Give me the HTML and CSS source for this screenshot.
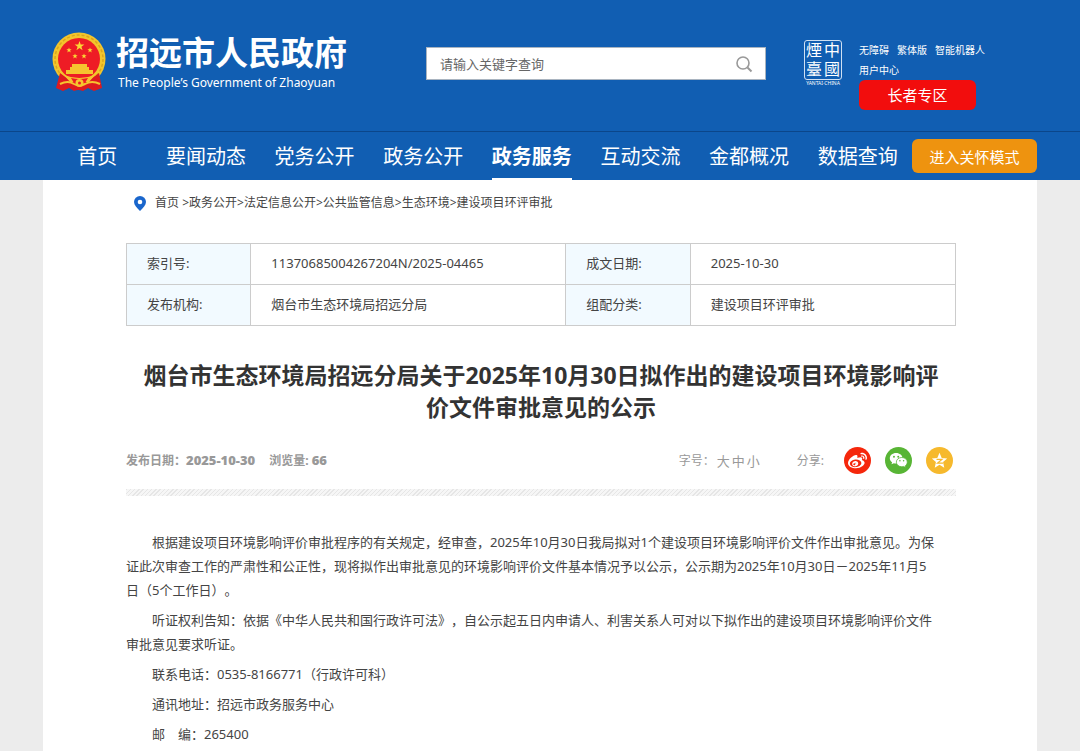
FILE: index.html
```html
<!DOCTYPE html>
<html lang="zh-CN">
<head>
  <meta charset="UTF-8" />
  <meta name="viewport" content="width=device-width, initial-scale=1.0" />
  <title>招远市人民政府</title>
  <link rel="stylesheet" href="styles.css">
</head>
<body>
  <header class="header">
    <div class="container top">
      <a class="logo" href="#">
        <svg class="emblem" viewBox="0 0 55 61" aria-hidden="true">
          <circle cx="27" cy="27" r="26.500" fill="#f3c52c"/>
          <circle cx="27" cy="27" r="24" fill="none" stroke="#dca51c" stroke-width="1.500" stroke-dasharray="3 2"/>
          <circle cx="27" cy="27" r="21" fill="#ee1c25"/>
          <path d="M27.500 9l1.200 3.500h3.700l-3 2.200 1.200 3.500-3.100-2.200-3.100 2.200 1.200-3.500-3-2.200h3.700z" fill="#fbd935"/>
          <g fill="#fbd935">
            <path id="star" d="M17 15.500l.7 1.800h1.900l-1.500 1.200.6 1.900-1.700-1.200-1.700 1.200.6-1.900-1.500-1.200h1.900z"/>
            <use href="#star" x="6" y="6"/>
            <use href="#star" x="15" y="6"/>
            <use href="#star" x="21"/>
          </g>
          <path d="M20 32h15v3h2v3h4v4H14v-4h4v-3h2z" fill="#f6c42f"/>
          <path d="M8 41l8 6q11 4 23 0l8-6 3 15-8 3-6-3-5 3q-5-2-9 0l-5-3-6 3-7-3z" fill="#dd1a1f"/>
          <path d="M12 43q15 6 31 0l-6 7H18z" fill="#f6c42f"/>
          <path d="M19 46q8 2 17 0l-3 5H22z" fill="#ee1c25"/>
          <path d="M8 52q8-4 14 0 5 3 11 0 7-4 15 0" fill="none" stroke="#f6c42f" stroke-width="2"/>
          <circle cx="27.500" cy="51" r="4" fill="#f6c42f"/>
          <circle cx="27.500" cy="51" r="1.500" fill="#ee1c25"/>
        </svg>
        <span class="logo-text">
          <strong>招远市人民政府</strong>
          <small>The People’s Government of Zhaoyuan</small>
        </span>
      </a>

      <form class="search">
        <input type="text" placeholder="请输入关键字查询" aria-label="请输入关键字查询">
        <button type="button" aria-label="搜索">
          <svg viewBox="0 0 18 18" width="18" height="18">
            <circle cx="8" cy="8" r="6" fill="none" stroke="#999" stroke-width="1.600"/>
            <path d="M12.500 12.500l4 4" stroke="#999" stroke-width="2"/>
          </svg>
        </button>
      </form>

      <div class="tools">
        <a class="seal" href="#">
          <span class="seal-box"><i>煙</i><i>中</i><i>臺</i><i>國</i></span>
          <span class="seal-name">YANTAI·CHINA</span>
        </a>
        <div class="links">
          <div class="links-row">
            <a href="#">无障碍</a>
            <a href="#">繁体版</a>
            <a href="#">智能机器人</a>
          </div>
          <div class="links-row">
            <a href="#">用户中心</a>
          </div>
          <button class="elder" type="button">长者专区</button>
        </div>
      </div>
    </div>

    <div class="nav-bar">
      <nav class="container nav">
        <ul>
          <li><a href="#">首页</a></li>
          <li><a href="#">要闻动态</a></li>
          <li><a href="#">党务公开</a></li>
          <li><a href="#">政务公开</a></li>
          <li><a class="active" href="#">政务服务</a></li>
          <li><a href="#">互动交流</a></li>
          <li><a href="#">金都概况</a></li>
          <li><a href="#">数据查询</a></li>
        </ul>
        <button class="care" type="button">进入关怀模式</button>
      </nav>
    </div>
  </header>

  <main class="container main">
    <div class="crumbs">
      <svg viewBox="0 0 12 15" width="12" height="15" aria-hidden="true">
        <path d="M6 0a6 6 0 0 1 6 6c0 3-3 6-6 9C3 12 0 9 0 6a6 6 0 0 1 6-6z" fill="#1a66cc"/>
        <circle cx="6" cy="6" r="2.300" fill="#fff"/>
      </svg>
      <div><a href="#">首页</a> &gt;<a href="#">政务公开</a>&gt;<a href="#">法定信息公开</a>&gt;<a href="#">公共监管信息</a>&gt;<a href="#">生态环境</a>&gt;<a href="#">建设项目环评审批</a></div>
    </div>

    <table class="info">
      <tr>
        <th scope="row">索引号:</th>
        <td>11370685004267204N/2025-04465</td>
        <th scope="row">成文日期:</th>
        <td>2025-10-30</td>
      </tr>
      <tr>
        <th scope="row">发布机构:</th>
        <td>烟台市生态环境局招远分局</td>
        <th scope="row">组配分类:</th>
        <td>建设项目环评审批</td>
      </tr>
    </table>

    <h1>烟台市生态环境局招远分局关于2025年10月30日拟作出的建设项目环境影响评价文件审批意见的公示</h1>

    <div class="meta">
      <div class="meta-left">
        <span>发布日期：<b>2025-10-30</b></span>
        <span>浏览量: <b>66</b></span>
      </div>
      <div class="sizes">
        <span>字号：</span>
        <a href="#">大</a>
        <a href="#">中</a>
        <a href="#">小</a>
      </div>
      <div class="share">
        <span>分享:</span>
        <a class="weibo" href="#" aria-label="微博">
          <svg viewBox="0 0 24 24" width="19" height="19"><path fill="#fff" d="M10.098 20.323c-3.977.391-7.414-1.406-7.672-4.020-.259-2.609 2.759-5.047 6.740-5.441 3.979-.394 7.413 1.404 7.671 4.018.259 2.600-2.759 5.049-6.737 5.439l-.002.004zM9.050 17.219c-.384.616-1.208.884-1.829.602-.612-.279-.793-.991-.406-1.593.379-.595 1.176-.861 1.793-.601.622.263.820.972.442 1.592zm1.270-1.627c-.141.237-.449.353-.689.253-.236-.090-.313-.361-.177-.586.138-.227.436-.346.672-.240.239.090.315.360.180.601l.014-.028zm.176-2.719c-1.893-.493-4.033.450-4.857 2.118-.836 1.704-.026 3.591 1.886 4.210 1.983.640 4.318-.341 5.132-2.179.800-1.793-.201-3.642-2.161-4.149zm7.563-1.224c-.346-.105-.570-.180-.405-.615.375-.977.420-1.804 0-2.404-.781-1.112-2.915-1.053-5.364-.030 0 0-.766.331-.571-.271.376-1.217.315-2.224-.270-2.809-1.338-1.337-4.869.045-7.888 3.080C1.309 10.870 0 13.273 0 15.348c0 3.981 5.099 6.395 10.086 6.395 6.536 0 10.888-3.801 10.888-6.820 0-1.822-1.547-2.854-2.915-3.284v.010zm1.908-5.092c-.766-.856-1.908-1.187-2.960-.962-.436.090-.706.511-.616.932.090.420.511.691.932.602.511-.105 1.067.044 1.442.465.376.421.466.977.316 1.473-.136.406.089.856.510.992.405.119.857-.105.992-.512.330-1.021.120-2.178-.646-3.035l.030.045zm2.418-2.195c-1.576-1.757-3.905-2.419-6.054-1.968-.496.104-.812.587-.706 1.081.104.496.586.813 1.082.707 1.532-.331 3.185.150 4.296 1.383 1.112 1.246 1.429 2.943.947 4.416-.165.480.106 1.007.586 1.157.479.165.991-.104 1.157-.586.675-2.088.241-4.478-1.338-6.235l.030.045z"/></svg>
        </a>
        <a class="wechat" href="#" aria-label="微信">
          <svg viewBox="0 0 20 18" width="19" height="17">
            <path fill="#fff" d="M7.500 1C3.600 1 .8 3.500.8 6.600c0 1.800.9 3.300 2.400 4.300l-.6 2.200 2.500-1.300c.8.200 1.500.3 2.400.3 3.800 0 6.800-2.400 6.800-5.500S11.300 1 7.500 1z"/>
            <path fill="#fff" stroke="#58b535" stroke-width=".8" d="M13.500 5.800c-3.300 0-5.800 2.200-5.800 4.900s2.500 4.900 5.800 4.900c.7 0 1.400-.1 2-.3l2.200 1.200-.5-1.900c1.300-.9 2.100-2.300 2.100-3.900 0-2.700-2.500-4.900-5.800-4.900z"/>
            <g fill="#58b535"><circle cx="5.200" cy="5" r="1"/><circle cx="9.700" cy="5" r="1"/><circle cx="11.500" cy="9.300" r=".8"/><circle cx="15.400" cy="9.300" r=".8"/></g>
          </svg>
        </a>
        <a class="qzone" href="#" aria-label="QQ空间">
          <svg viewBox="0 0 20 20" width="17" height="17">
            <path fill="#fff" d="M10 1l2.600 6 6.400.6-4.800 4.300 1.400 6.500L10 15l-5.600 3.400 1.400-6.500L1 7.600 7.400 7z"/>
            <path fill="none" stroke="#f6b92d" stroke-width="1.500" d="M6.500 8.800h6.300l-5 4.200h6.500"/>
          </svg>
        </a>
      </div>
    </div>

    <div class="stripe"></div>

    <article class="content">
      <p>根据建设项目环境影响评价审批程序的有关规定，经审查，2025年10月30日我局拟对1个建设项目环境影响评价文件作出审批意见。为保证此次审查工作的严肃性和公正性，现将拟作出审批意见的环境影响评价文件基本情况予以公示，公示期为2025年10月30日－2025年11月5日（5个工作日）。</p>
      <p>听证权利告知：依据《中华人民共和国行政许可法》，自公示起五日内申请人、利害关系人可对以下拟作出的建设项目环境影响评价文件审批意见要求听证。</p>
      <p>联系电话：0535-8166771（行政许可科）</p>
      <p>通讯地址：招远市政务服务中心</p>
      <p>邮&emsp;编：265400</p>
    </article>
  </main>
</body>
</html>
```
FILE: styles.css
```css
* {
  box-sizing: border-box;
}
body {
  margin: 0;
  background: #ececec;
  color: #444;
  font-family: "Noto Sans", "Noto Sans CJK SC", sans-serif;
  font-size: 13px;
  text-spacing-trim: space-all;
}
a {
  color: inherit;
  text-decoration: none;
}
button, input {
  font-family: inherit;
}
.container {
  max-width: 994px;
  margin: 0 auto;
}

/* header */
.header {
  background: #115eb2;
  color: #fff;
}
.top {
  display: grid;
  grid-template-columns: 374px 340px 1fr;
  align-items: start;
  height: 131px;
  padding-left: 9px;
}
.logo {
  display: flex;
  gap: 9px;
  padding-top: 32px;
}
.emblem {
  width: 55px;
  height: 61px;
}
.logo-text strong {
  display: block;
  font-size: 33px;
  line-height: 42px;
}
.logo-text small {
  display: block;
  padding-left: 2px;
  font-size: 12px;
  line-height: 18px;
}
.search {
  display: flex;
  margin-top: 47px;
  height: 33px;
  background: #fff;
  border: 1px solid #a9b4c0;
}
.search input {
  flex: 1;
  min-width: 0;
  padding: 0 13px;
  border: 0;
  background: none;
  font-size: 13px;
}
.search input::placeholder {
  color: #666;
}
.search button {
  width: 42px;
  padding: 4px 0 0;
  border: 0;
  background: none;
}
.tools {
  display: flex;
  gap: 17px;
  padding: 40px 0 0 38px;
}
.seal {
  width: 38px;
}
.seal-box {
  display: grid;
  grid-template-columns: 1fr 1fr;
  border: 1px solid #cfe0f3;
  border-radius: 3px;
  text-align: center;
}
.seal-box i {
  font-size: 16px;
  font-style: normal;
  line-height: 19px;
}
.seal-name {
  display: block;
  font-size: 5px;
  line-height: 6px;
  text-align: center;
  white-space: nowrap;
}
.links-row {
  display: flex;
  gap: 8px;
  font-size: 10px;
  line-height: 20px;
}
.elder {
  display: block;
  width: 117px;
  height: 30px;
  padding: 0 0 2px;
  border: 0;
  border-radius: 6px;
  background: #f20d0d;
  color: #fff;
  font-size: 15px;
}

/* nav */
.nav-bar {
  border-top: 1px solid #0b468a;
}
.nav {
  display: flex;
  align-items: center;
  height: 48px;
}
.nav ul {
  display: flex;
  flex: 1;
  margin: 0;
  padding: 0;
  list-style: none;
}
.nav li {
  flex: 1;
  text-align: center;
}
.nav li a {
  display: block;
  width: fit-content;
  margin: 0 auto;
  padding-top: 4px;
  font-size: 20px;
  line-height: 42px;
  border-bottom: 2px solid transparent;
}
.nav li a.active {
  font-weight: bold;
  border-color: #fff;
}
.care {
  width: 125px;
  height: 34px;
  padding: 0;
  border: 0;
  border-radius: 6px;
  background: #ee930f;
  color: #fff;
  font-size: 15px;
}

/* page */
.main {
  min-height: 571px;
  padding: 12px 81px 0 83px;
  background: #fff;
}
.crumbs {
  display: flex;
  align-items: center;
  gap: 9px;
  padding-left: 8px;
  font-size: 12px;
  line-height: 22px;
}
.info {
  width: 100%;
  margin-top: 29px;
  border-collapse: collapse;
  table-layout: fixed;
}
.info th, .info td {
  height: 41px;
  padding: 0 20px 3px;
  border: 1px solid #ccc;
  font-weight: normal;
  line-height: 20px;
  text-align: left;
}
.info th {
  width: 15%;
  background: #f2faff;
}
.info td:nth-child(2) {
  width: 38%;
}
h1 {
  margin: 33px 0 0;
  padding: 0 9px;
  color: #333;
  font-size: 23px;
  line-height: 32px;
  text-align: center;
}
.meta {
  display: flex;
  align-items: center;
  height: 28px;
  margin-top: 23px;
  color: #999;
  font-size: 12px;
}
.meta-left {
  display: flex;
  flex: 1;
  gap: 14px;
  font-weight: bold;
}
.meta b {
  font-size: 13px;
}
.sizes {
  display: flex;
  align-items: center;
  gap: 2px;
  margin-right: 37px;
}
.sizes a {
  font-size: 13px;
}
.share {
  display: flex;
  align-items: center;
  gap: 14px;
  margin-right: 3px;
}
.share span {
  margin-right: 6px;
}
.share a {
  display: flex;
  align-items: center;
  justify-content: center;
  width: 27px;
  height: 27px;
  border-radius: 50%;
}
.weibo {
  background: #f5270c;
}
.wechat {
  background: #58b535;
}
.qzone {
  background: #f6b92d;
}
.stripe {
  height: 7px;
  margin-top: 15px;
  background: repeating-linear-gradient(135deg, #e6e6e6 0 1px, #f6f6f6 1px 3px);
}
.content {
  padding: 34px 17px 5px 0;
}
.content p {
  margin: 0 0 6px;
  line-height: 24px;
  text-indent: 2em;
}
```
